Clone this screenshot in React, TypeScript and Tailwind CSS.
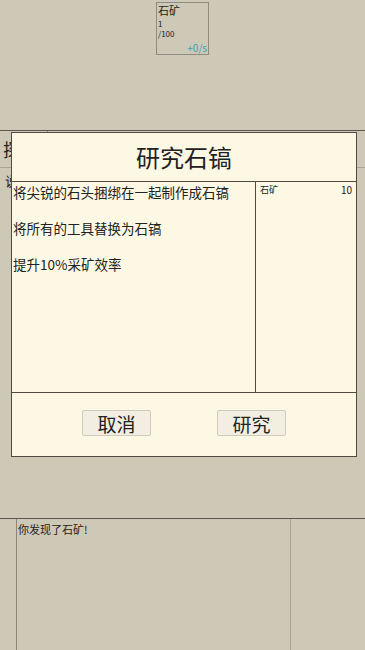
import React from 'react';

const font = { fontFamily: '"Noto Sans CJK SC", "Noto Sans", sans-serif' };

function ResourceCard() {
  return (
    <div className="mx-auto mt-[2px] w-[53px] h-[53px] border border-[#8e8b82] flex flex-col px-[1px] leading-none text-[#222]">
      <div className="text-[11px] mt-[2px]">石矿</div>
      <div className="text-[8px] mt-[4px]">1</div>
      <div className="text-[8px] mt-[2px]">/100</div>
      <div className="text-[10px] text-[#3aa3bd] text-right mt-auto mb-[1px]">+0/s</div>
    </div>
  );
}

function ResearchModal() {
  return (
    <div className="absolute left-[11px] top-[132px] w-[346px] h-[325px] bg-[#fdf8e4] border border-[#4d4b44] flex flex-col text-[#222]">
      <div className="h-[49px] flex items-center justify-center text-[24px] border-b border-[#4d4b44]">
        研究石镐
      </div>
      <div className="flex h-[211px] border-b border-[#4d4b44]">
        <div className="w-[243px] pl-[1px] pt-[1px] text-[13.5px] leading-[18px]">
          <p className="mb-[18px]">将尖锐的石头捆绑在一起制作成石镐</p>
          <p className="mb-[18px]">将所有的工具替换为石镐</p>
          <p>提升10%采矿效率</p>
        </div>
        <div className="flex-1 border-l border-[#4d4b44] px-[4px] pt-[2px]">
          <div className="flex justify-between items-center text-[10px] leading-[12px]">
            <span className="text-[9px]">石矿</span>
            <span>10</span>
          </div>
        </div>
      </div>
      <div className="flex-1 flex items-start justify-center gap-[66px] pt-[17px]">
        <button className="w-[69px] h-[26px] bg-[#f2eee1] border border-[#d0cbbd] rounded-[2px] text-[19px] leading-none text-[#222]">
          取消
        </button>
        <button className="w-[69px] h-[26px] bg-[#f2eee1] border border-[#d0cbbd] rounded-[2px] text-[19px] leading-none text-[#222]">
          研究
        </button>
      </div>
    </div>
  );
}

export default function App() {
  return (
    <div className="relative w-full h-[650px] bg-[#cec8b6] overflow-hidden flex flex-col" style={font}>
      <ResourceCard />
      <div className="mt-[75px] h-[38px] border-t border-[#5a574f] border-b border-b-[#a9a495] flex items-center">
        <div className="h-full border-r border-[#8e8b82] pl-[3px] pr-[8px] flex items-center text-[18px] text-[#222]">
          探索
        </div>
      </div>
      <div className="flex-1 pl-[5px] pt-[6px] text-[13px] text-[#222]">
        <div className="leading-none">说</div>
      </div>
      <div className="h-[132px] border-t border-[#5a574f] flex">
        <div className="ml-[16px] w-[275px] border-l border-[#8b877b] border-r border-r-[#aaa596] px-[1px] pt-[3px] text-[11px] leading-[14px] text-[#222]">
          你发现了石矿!
        </div>
      </div>
      <ResearchModal />
    </div>
  );
}
